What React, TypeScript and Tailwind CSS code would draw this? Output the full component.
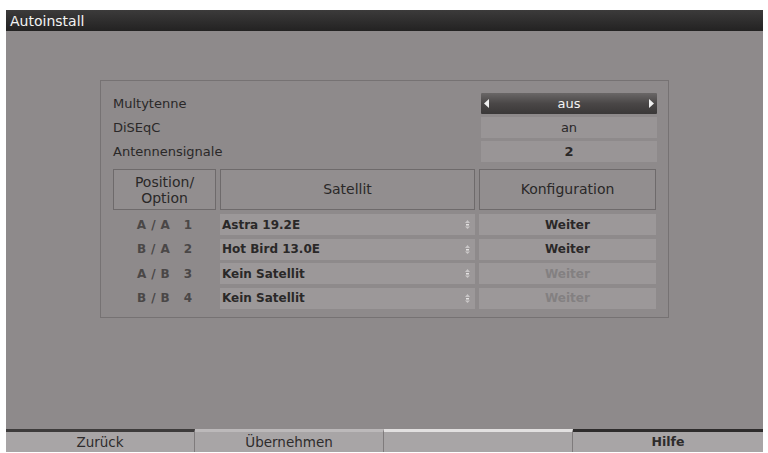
import React from "react";

const font = { fontFamily: '"DejaVu Sans", Verdana, sans-serif' };

function UpDown() {
  return (
    <svg width="7" height="11" viewBox="0 0 7 11" className="shrink-0">
      <path d="M3.5 1 L6 4 L1 4 Z" fill="#c9c6c7" />
      <rect x="2" y="5" width="3" height="1.5" fill="#e4e2e2" />
      <path d="M3.5 10 L6 7.5 L1 7.5 Z" fill="#c9c6c7" />
    </svg>
  );
}

const rows = [
  { a: "A", b: "A", n: "1", sat: "Astra 19.2E", active: true },
  { a: "B", b: "A", n: "2", sat: "Hot Bird 13.0E", active: true },
  { a: "A", b: "B", n: "3", sat: "Kein Satellit", active: false },
  { a: "B", b: "B", n: "4", sat: "Kein Satellit", active: false },
];

export default function App() {
  return (
    <div className="w-[768px] h-[453px] bg-white pt-[10px] pl-[6px]" style={font}>
      <div className="w-[757px] h-[442px] flex flex-col bg-[#8e8a8b]">
        {/* Title bar */}
        <div className="h-[21px] bg-gradient-to-b from-[#3c3b3b] to-[#232222] flex items-center pl-[4px]">
          <span className="text-[#f2f2f2] text-[14px] leading-none">Autoinstall</span>
        </div>

        {/* Main area */}
        <div className="flex-1 pl-[94px] pt-[49px]">
          <div className="w-[569px] h-[238px] border border-[#767273] pt-[12px] pl-[12px] pr-[11px] flex flex-col text-[#2a2828]">
            {/* Settings rows */}
            <div className="flex flex-col gap-[3px]">
              <div className="flex items-center h-[21px]">
                <span className="flex-1 text-[13px]">Multytenne</span>
                <div className="w-[176px] h-[21px] bg-gradient-to-b from-[#6a6767] via-[#4a4747] to-[#3a3838] rounded-[1px] flex items-center justify-between px-[3px] text-[#f4f4f4] text-[13px]">
                  <svg width="5" height="9" viewBox="0 0 5 9"><path d="M5 0 L0 4.5 L5 9 Z" fill="#f0f0f0" /></svg>
                  <span>aus</span>
                  <svg width="5" height="9" viewBox="0 0 5 9"><path d="M0 0 L5 4.5 L0 9 Z" fill="#f0f0f0" /></svg>
                </div>
              </div>
              <div className="flex items-center h-[21px]">
                <span className="flex-1 text-[13px]">DiSEqC</span>
                <div className="w-[176px] h-[21px] bg-[#999596] flex items-center justify-center text-[13px]">an</div>
              </div>
              <div className="flex items-center h-[21px]">
                <span className="flex-1 text-[13px]">Antennensignale</span>
                <div className="w-[176px] h-[21px] bg-[#999596] flex items-center justify-center text-[13px] font-bold">2</div>
              </div>
            </div>

            {/* Header */}
            <div className="flex gap-[4px] mt-[7px] h-[41px]">
              <div className="w-[103px] border border-[#6e6a6b] bg-[#928e8f] flex items-center justify-center text-center text-[14px] leading-[16px]">
                Position/
                <br />
                Option
              </div>
              <div className="w-[255px] border border-[#6e6a6b] bg-[#928e8f] flex items-center justify-center text-[14px]">
                Satellit
              </div>
              <div className="w-[177px] border border-[#6e6a6b] bg-[#928e8f] flex items-center justify-center text-[14px]">
                Konfiguration
              </div>
            </div>

            {/* Data rows */}
            <div className="flex flex-col gap-[3.5px] mt-[4px]">
              {rows.map((r) => (
                <div key={r.n} className="flex gap-[4px] h-[21px]">
                  <div className="w-[103px] flex items-center justify-center text-[12px] font-bold text-[#4a4747]">
                    <span className="flex gap-[5px]">
                      <span>{r.a}</span>
                      <span>/</span>
                      <span>{r.b}</span>
                    </span>
                    <span className="ml-[14px]">{r.n}</span>
                  </div>
                  <div className="w-[255px] bg-[#9c9899] flex items-center justify-between pl-[2px] pr-[4px] text-[12px] font-bold">
                    <span>{r.sat}</span>
                    <UpDown />
                  </div>
                  <div
                    className={`w-[177px] bg-[#9c9899] flex items-center justify-center text-[12px] font-bold ${
                      r.active ? "text-[#2a2828]" : "text-[#838081]"
                    }`}
                  >
                    Weiter
                  </div>
                </div>
              ))}
            </div>
          </div>
        </div>

        {/* Bottom buttons */}
        <div className="flex h-[23px] bg-[#a8a5a6] text-[13.5px] text-[#2e2c2c]">
          <div className="w-[189px] border-t-[3px] border-[#3d3b3b] border-r border-r-[#7f7b7c] flex items-center justify-center">
            Zurück
          </div>
          <div className="w-[189px] border-t-[3px] border-[#bcb9ba] border-r border-r-[#7f7b7c] flex items-center justify-center">
            Übernehmen
          </div>
          <div className="w-[189px] border-t-[3px] border-[#e2e0e0] border-r border-r-[#7f7b7c] flex items-center justify-center"></div>
          <div className="flex-1 border-t-[3px] border-[#2e2c2c] flex items-center justify-center font-bold text-[12.5px]">
            Hilfe
          </div>
        </div>
      </div>
    </div>
  );
}
